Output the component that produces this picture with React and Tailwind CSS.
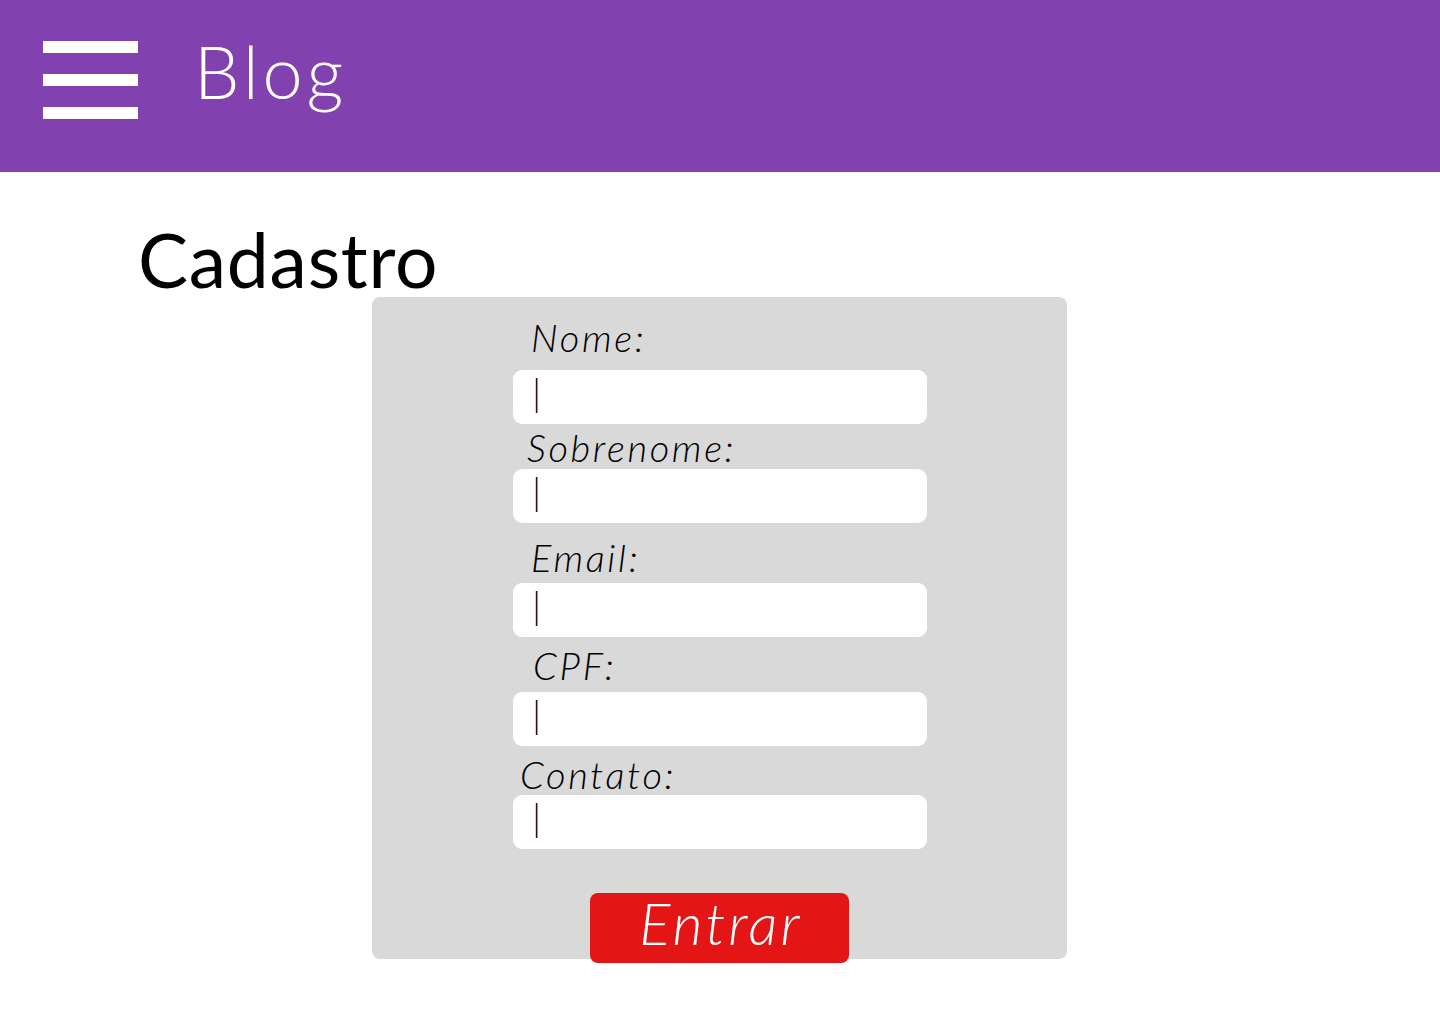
export default function App() {
  const font = { fontFamily: 'Lato, "Open Sans", sans-serif' };
  const fields = [
    { label: "Nome:", lm: "ml-[159px]", mt: "mt-[22px]", gap: "mt-[15px]" },
    { label: "Sobrenome:", lm: "ml-[155px]", mt: "mt-[5px]", gap: "mt-[4px]" },
    { label: "Email:", lm: "ml-[159px]", mt: "mt-[16px]", gap: "mt-[8px]" },
    { label: "CPF:", lm: "ml-[161px]", mt: "mt-[10px]", gap: "mt-[9px]" },
    { label: "Contato:", lm: "ml-[148px]", mt: "mt-[10px]", gap: "mt-[3px]" },
  ];
  return (
    <div className="min-h-[1024px] w-[1440px] bg-white" style={font}>
      <header className="flex h-[172px] items-start bg-[#8142af] pl-[43px]">
        <div className="mt-[41px] flex w-[95px] flex-col gap-[21px]">
          <div className="h-[12px] bg-white" />
          <div className="h-[12px] bg-white" />
          <div className="h-[12px] bg-white" />
        </div>
        <div className="ml-[56px] mt-[35px] text-[72px] font-light leading-none tracking-[0.055em] text-white">
          Blog
        </div>
      </header>
      <main>
        <h1 className="ml-[138px] mt-[50px] text-[75px] font-normal leading-none tracking-[0.01em] text-black">
          Cadastro
        </h1>
        <div className="relative ml-[372px] flex h-[662px] w-[695px] flex-col rounded-[8px] bg-[#d9d9d9]">
          {fields.map((f) => (
            <div key={f.label} className={`${f.mt} flex shrink-0 flex-col`}>
              <div className={`${f.lm} h-[36px] text-[38px] font-light italic leading-[36px] tracking-[0.07em] text-black`}>
                {f.label}
              </div>
              <div className={`${f.gap} ml-[141px] flex h-[54px] w-[414px] items-start rounded-[9px] bg-white pl-[19px] pt-[2px]`}>
                <span className="text-[38px] font-light italic leading-none text-black">|</span>
              </div>
            </div>
          ))}
          <button className="ml-[218px] mt-[44px] flex h-[70px] w-[259px] shrink-0 items-start justify-center rounded-[8px] bg-[#e41515] pt-[1px] pl-[3px] text-[58px] font-light italic leading-none tracking-[0.055em] text-white">
            Entrar
          </button>
        </div>
      </main>
    </div>
  );
}
